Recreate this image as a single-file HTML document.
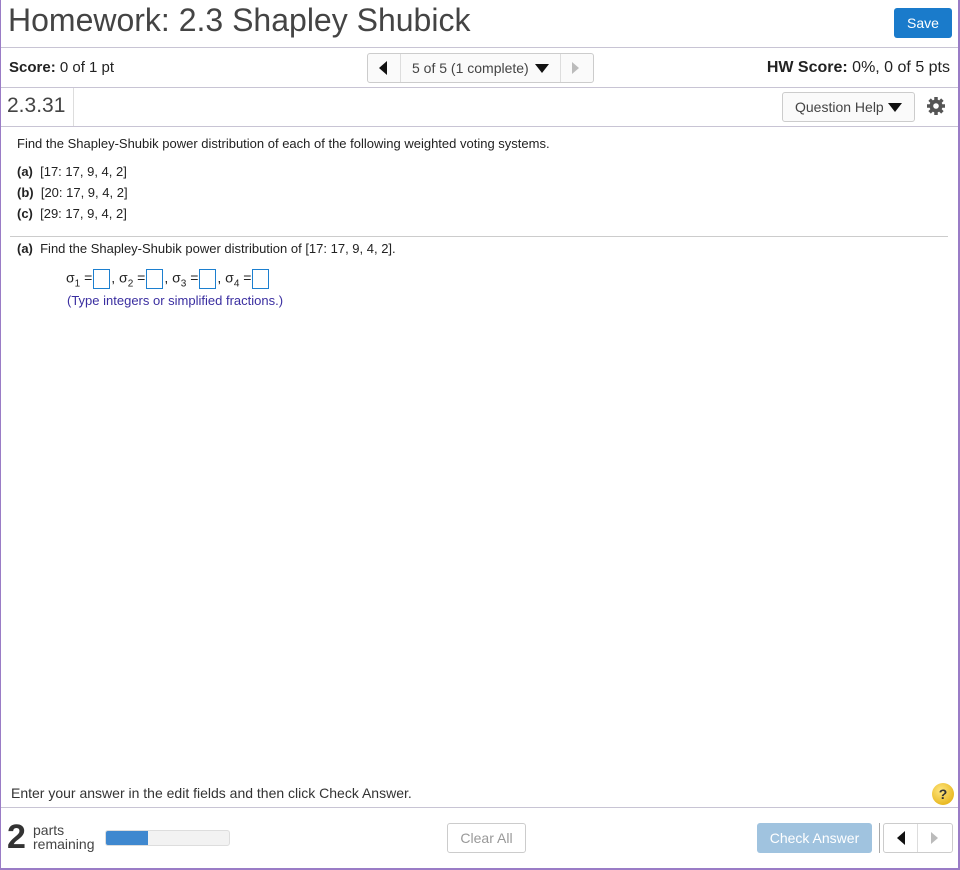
<!DOCTYPE html>
<html><head><style>
*{box-sizing:border-box;margin:0;padding:0}
body{width:960px;height:870px;position:relative;background:#fff;font-family:"Liberation Sans",sans-serif;color:#222;overflow:hidden}
.frame{position:absolute;left:0;top:0;width:960px;height:870px;border-left:1px solid #9a7cc6;border-right:2px solid #9a7cc6;border-bottom:2px solid #9a7cc6}
.a{position:absolute;white-space:nowrap}
.hl{position:absolute;left:0;width:960px;height:1px;background:#c8c4d4}
.btn{position:absolute;border:1px solid #ccc;border-radius:3px;background:#fafafa}
.box{display:inline-block;width:17px;height:20px;border:1px solid #1c7fcf;vertical-align:middle;margin:0 1px}
.s{font-size:14px}
.s sub{font-size:10px}
</style></head><body>
<div class="a" style="left:8px;top:2px;font-size:32px;color:#444">Homework: 2.3 Shapley Shubick</div>
<div class="a" style="left:894px;top:8px;width:58px;height:30px;background:#1a7bcb;border-radius:3px;color:#fff;font-size:14px;text-align:center;line-height:30px">Save</div>
<div class="hl" style="top:47px"></div>
<div class="a" style="left:9px;top:59px;font-size:15px"><b>Score:</b> 0 of 1 pt</div>
<div class="btn" style="left:367px;top:53px;width:227px;height:30px"></div>
<div class="a" style="left:400px;top:54px;width:1px;height:28px;background:#ddd"></div>
<div class="a" style="left:560px;top:54px;width:1px;height:28px;background:#ddd"></div>
<div class="a" style="left:379px;top:61px;width:0;height:0;border-top:7px solid transparent;border-bottom:7px solid transparent;border-right:8px solid #111"></div>
<div class="a" style="left:412px;top:60px;font-size:14px;color:#444">5 of 5 (1 complete)</div>
<div class="a" style="left:535px;top:64px;width:0;height:0;border-left:7px solid transparent;border-right:7px solid transparent;border-top:9px solid #111"></div>
<div class="a" style="left:572px;top:62px;width:0;height:0;border-top:6px solid transparent;border-bottom:6px solid transparent;border-left:7px solid #bbb"></div>
<div class="a" style="right:10px;top:59px;font-size:16px"><b>HW Score:</b> 0%, 0 of 5 pts</div>
<div class="hl" style="top:87px"></div>
<div class="a" style="left:7px;top:94px;font-size:21px;color:#444">2.3.31</div>
<div class="a" style="left:73px;top:88px;width:1px;height:38px;background:#ddd"></div>
<div class="btn" style="left:782px;top:92px;width:133px;height:30px"></div>
<div class="a" style="left:795px;top:99px;font-size:14px;color:#444">Question Help</div>
<div class="a" style="left:888px;top:103px;width:0;height:0;border-left:7px solid transparent;border-right:7px solid transparent;border-top:9px solid #111"></div>
<svg class="a" style="left:926px;top:96px" width="20" height="20" viewBox="0 0 20 20"><g fill="#555"><circle cx="10" cy="10" r="6.5"/><g stroke="#555" stroke-width="3.5"><line x1="10" y1="1" x2="10" y2="19"/><line x1="1" y1="10" x2="19" y2="10"/><line x1="3.6" y1="3.6" x2="16.4" y2="16.4"/><line x1="16.4" y1="3.6" x2="3.6" y2="16.4"/></g></g><circle cx="10" cy="10" r="2.8" fill="#fff"/></svg>
<div class="hl" style="top:126px"></div>
<div class="a" style="left:17px;top:136px;font-size:13px">Find the Shapley-Shubik power distribution of each of the following weighted voting systems.</div>
<div class="a" style="left:17px;top:164px;font-size:13px"><b>(a)</b>&nbsp;&nbsp;[17: 17, 9, 4, 2]</div>
<div class="a" style="left:17px;top:185px;font-size:13px"><b>(b)</b>&nbsp;&nbsp;[20: 17, 9, 4, 2]</div>
<div class="a" style="left:17px;top:206px;font-size:13px"><b>(c)</b>&nbsp;&nbsp;[29: 17, 9, 4, 2]</div>
<div class="a" style="left:10px;top:236px;width:938px;height:1px;background:#ccc"></div>
<div class="a" style="left:17px;top:241px;font-size:13px"><b>(a)</b>&nbsp;&nbsp;Find the Shapley-Shubik power distribution of [17: 17, 9, 4, 2].</div>
<div class="a s" style="left:66px;top:269px">σ<sub>1</sub> =<span class="box"></span>, σ<sub>2</sub> =<span class="box"></span>, σ<sub>3</sub> =<span class="box"></span>, σ<sub>4</sub> =<span class="box"></span></div>
<div class="a" style="left:67px;top:293px;font-size:13px;color:#3a2ea0">(Type integers or simplified fractions.)</div>
<div class="a" style="left:11px;top:785px;font-size:14px;color:#333">Enter your answer in the edit fields and then click Check Answer.</div>
<div class="a" style="left:932px;top:783px;width:22px;height:22px;border-radius:50%;background:radial-gradient(circle at 40% 35%,#ffe680,#e0a800);color:#333;font-weight:bold;font-size:14px;text-align:center;line-height:22px">?</div>
<div class="hl" style="top:807px"></div>
<div class="a" style="left:7px;top:818px;font-size:34px;font-weight:bold;color:#333">2</div>
<div class="a" style="left:33px;top:823px;font-size:14px;line-height:14px;color:#444">parts<br>remaining</div>
<div class="a" style="left:105px;top:830px;width:125px;height:16px;border:1px solid #ddd;border-radius:3px;background:#f2f2f2;overflow:hidden"><div style="width:42px;height:100%;background:#3f88cf"></div></div>
<div class="btn" style="left:447px;top:823px;width:79px;height:30px;background:#fff;color:#999;font-size:14px;text-align:center;line-height:28px">Clear All</div>
<div class="a" style="left:757px;top:823px;width:115px;height:30px;background:#a0c3df;border-radius:3px;color:#fff;font-size:14px;text-align:center;line-height:30px">Check Answer</div>
<div class="a" style="left:879px;top:823px;width:1px;height:30px;background:#aaa"></div>
<div class="btn" style="left:883px;top:823px;width:70px;height:30px;background:#fff"></div>
<div class="a" style="left:917px;top:824px;width:1px;height:28px;background:#ddd"></div>
<div class="a" style="left:897px;top:831px;width:0;height:0;border-top:7px solid transparent;border-bottom:7px solid transparent;border-right:8px solid #111"></div>
<div class="a" style="left:931px;top:832px;width:0;height:0;border-top:6px solid transparent;border-bottom:6px solid transparent;border-left:7px solid #bbb"></div>
<div class="frame"></div>
</body></html>
